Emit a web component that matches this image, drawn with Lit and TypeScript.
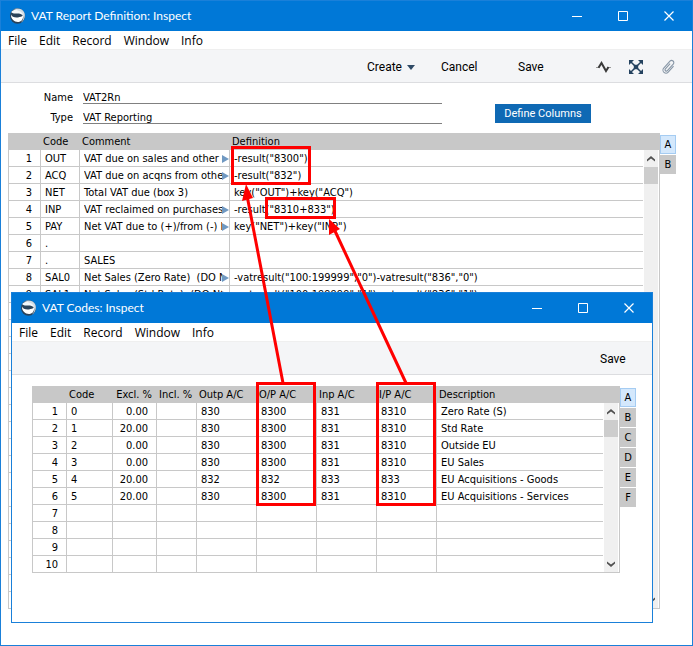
import { LitElement, html, css, svg, nothing } from "lit";
import { customElement, property } from "lit/decorators.js";
import { classMap } from "lit/directives/class-map.js";

interface Column {
  label: string;
  cls: string;
  numeric?: boolean;
}

const MENUS = ["File", "Edit", "Record", "Window", "Info"];

const REPORT_COLUMNS: Column[] = [
  { label: "", cls: "w32", numeric: true },
  { label: "Code", cls: "w39" },
  { label: "Comment", cls: "w150" },
  { label: "Definition", cls: "rest" },
];

const REPORT_ROWS: string[][] = [
  ["1", "OUT", "VAT due on sales and other o", '-result("8300")'],
  ["2", "ACQ", "VAT due on acqns from other", '-result("832")'],
  ["3", "NET", "Total VAT due (box 3)", 'key("OUT")+key("ACQ")'],
  ["4", "INP", "VAT reclaimed on purchases,", '-result("8310+833")'],
  ["5", "PAY", "Net VAT due to (+)/from (-) H", 'key("NET")+key("INP")'],
  ["6", ".", "", ""],
  ["7", ".", "SALES", ""],
  ["8", "SAL0", "Net Sales (Zero Rate)  (DO NO", '-vatresult("100:199999","0")-vatresult("836","0")'],
  ["9", "SAL1", "Net Sales (Std Rate)  (DO NOT", '-vatresult("100:199999","1")-vatresult("836","1")'],
  ...Array.from({ length: 18 }, () => ["", "", "", ""]),
];

const CODE_COLUMNS: Column[] = [
  { label: "", cls: "w34", numeric: true },
  { label: "Code", cls: "w46" },
  { label: "Excl. %", cls: "w44", numeric: true },
  { label: "Incl. %", cls: "w40" },
  { label: "Outp A/C", cls: "w60" },
  { label: "O/P A/C", cls: "w60" },
  { label: "Inp A/C", cls: "w60" },
  { label: "I/P A/C", cls: "w60" },
  { label: "Description", cls: "rest" },
];

const CODE_ROWS: string[][] = [
  ["1", "0", "0.00", "", "830", "8300", "831", "8310", "Zero Rate (S)"],
  ["2", "1", "20.00", "", "830", "8300", "831", "8310", "Std Rate"],
  ["3", "2", "0.00", "", "830", "8300", "831", "8310", "Outside EU"],
  ["4", "3", "0.00", "", "830", "8300", "831", "8310", "EU Sales"],
  ["5", "4", "20.00", "", "832", "832", "833", "833", "EU Acquisitions - Goods"],
  ["6", "5", "20.00", "", "830", "8300", "831", "8310", "EU Acquisitions - Services"],
  ...["7", "8", "9", "10"].map((n) => [n, "", "", "", "", "", "", "", ""]),
];

const base = css`
  * {
    box-sizing: border-box;
  }
  button,
  input {
    font: inherit;
    color: inherit;
    border: 0;
    padding: 0;
    margin: 0;
    background: none;
    border-radius: 0;
  }
  svg {
    display: block;
  }
`;

/** A framed desktop window: title bar, menu bar, toolbar slot and content. */
@customElement("app-window")
export class AppWindow extends LitElement {
  @property() heading = "";

  static styles = [
    base,
    css`
      :host {
        display: flex;
        flex-direction: column;
        box-sizing: border-box;
        border: 1px solid #1a80d9;
        background: #fff;
      }
      .title {
        display: flex;
        align-items: center;
        height: 30px;
        padding-left: 8px;
        gap: 5px;
        background: #0078d7;
        color: #fff;
        font: 12px/16px Lato, "Open Sans", sans-serif;
      }
      .name {
        flex: 1;
        font: inherit;
        margin: 0;
      }
      .controls {
        display: flex;
      }
      .controls button {
        width: 46px;
        height: 30px;
        display: grid;
        place-items: center;
      }
      .menu {
        display: flex;
        gap: 12px;
        height: 18px;
        padding: 1px 0 0 7px;
        font: 12px/18px "Open Sans", "Noto Sans", sans-serif;
      }
      .toolbar {
        display: flex;
        justify-content: flex-end;
        align-items: center;
        height: 34px;
        padding-top: 2px;
        border-top: 1px solid #efefef;
        border-bottom: 1px solid #dcdde0;
        background: #f4f5f7;
      }
    `,
  ];

  render() {
    return html`
      <header class="title">
        <svg width="17" height="16" viewBox="0 0 17 16" aria-hidden="true">
          <ellipse cx="8.5" cy="8" rx="7.500" ry="7.700" fill="#2a4259" />
          <path d="M4 1.500C8-.5 14 .5 15.500 5c1.200 4-.8 8-3.500 9.500 2-2 2.800-4 2-6.500C13 4 8 1.500 4 1.500z" fill="#d3dde6" />
          <path d="M2.200 4.200C3 2.500 6 1.200 9 2.200c3 1 5 3 5.200 5.800-1.500-2.300-3.500-2.500-6-2.500C6 5.500 3.500 5.500 2.200 4.200z" fill="#f3f7fa" />
          <path d="M2 6.500C2.500 9 6 9.800 9 9.400c2-.3 4-.8 5-1.800.5 3.500-1.500 6.200-4.500 6.400C5.500 14.300 1.600 11 2 6.500z" fill="#fff" />
        </svg>
        <h1 class="name">${this.heading}</h1>
        <div class="controls">
          <button aria-label="Minimize">
            <svg width="11" height="11"><path d="M0 5.500h10" stroke="#fff" /></svg>
          </button>
          <button aria-label="Maximize">
            <svg width="11" height="11"><path d="M.5.5h9v9h-9z" stroke="#fff" fill="none" /></svg>
          </button>
          <button aria-label="Close">
            <svg width="11" height="11"><path d="M.5.5l9 9M9.500.5l-9 9" stroke="#fff" stroke-width="1.200" /></svg>
          </button>
        </div>
      </header>
      <nav class="menu">${MENUS.map((m) => html`<button>${m}</button>`)}</nav>
      <div class="toolbar"><slot name="toolbar"></slot></div>
      <slot></slot>
    `;
  }
}

/** A ruled matrix with a scrollbar and lettered flip tabs at its right. */
@customElement("data-matrix")
export class DataMatrix extends LitElement {
  @property({ attribute: false }) columns: Column[] = [];
  @property({ attribute: false }) rows: string[][] = [];
  @property({ attribute: false }) tabs: string[] = [];
  /** Index of the column whose long values carry a continuation arrow. */
  @property({ type: Number }) clipped = -1;

  static styles = [
    base,
    css`
      :host {
        display: flex;
        align-items: flex-start;
        font: 11px/14px "DejaVu Sans Condensed", "Noto Sans", sans-serif;
      }
      .frame {
        flex: 1;
        display: flex;
        border: solid #c8c8c8;
        border-width: 0 1px;
      }
      table {
        flex: 1;
        width: 0;
        table-layout: fixed;
        border-spacing: 0;
      }
      th,
      td {
        height: 17px;
        padding: 2px 0 0 4px;
        border-bottom: 1px solid #c8c8c8;
        border-right: 1px solid #c8c8c8;
        text-align: left;
        font-weight: normal;
        white-space: pre;
        overflow: hidden;
      }
      th {
        padding-left: 2px;
        background: #c8c8c8;
      }
      th:last-child,
      td:last-child {
        border-right: 0;
      }
      .numeric {
        text-align: right;
        padding: 2px 8px 0 0;
      }
      th.numeric {
        padding-right: 4px;
      }
      .w32 { width: 32px; }
      .w34 { width: 34px; }
      .w39 { width: 39px; }
      .w40 { width: 40px; }
      .w44 { width: 44px; }
      .w46 { width: 46px; }
      .w60 { width: 60px; }
      .w150 { width: 150px; }
      .clip {
        display: flex;
        align-items: center;
      }
      .clip span {
        flex: 1;
        width: 0;
        overflow: hidden;
      }
      .side {
        width: 16px;
        display: flex;
        flex-direction: column;
        border-top: 17px solid #c8c8c8;
        border-bottom: 1px solid #c8c8c8;
        padding: 0 1px;
      }
      .bar {
        flex: 1;
        display: flex;
        flex-direction: column;
        align-items: center;
        background: #f0f0f0;
      }
      .bar button {
        height: 17px;
        width: 14px;
        display: grid;
        place-items: center;
      }
      .thumb {
        height: 17px;
        width: 14px;
        background: #cdcdcd;
      }
      .fill {
        flex: 1;
      }
      .tabs {
        display: grid;
        gap: 1px;
        padding-top: 2px;
      }
      .tabs button {
        width: 16px;
        height: 19px;
        padding-top: 1px;
        background: #c8c8c8;
      }
      .tabs .on {
        background: #d4e8fc;
        border: 1px solid #a5ccf2;
      }
    `,
  ];

  private cell(value: string, index: number) {
    const long = index === this.clipped && value.length > 24;
    return html`<td class=${classMap({ numeric: !!this.columns[index].numeric })}>${long
      ? html`<div class="clip"><span>${value}</span><svg width="7" height="8"><path d="M0 0l7 4-7 4z" fill="#7099c2" /></svg></div>`
      : value}</td>`;
  }

  render() {
    return html`
      <div class="frame">
        <table>
          <thead>
            <tr>
              ${this.columns.map(
                (c) => html`<th scope="col" class="${c.cls} ${c.numeric ? "numeric" : ""}">${c.label}</th>`
              )}
            </tr>
          </thead>
          <tbody>
            ${this.rows.map((row) => html`<tr>${row.map((v, i) => this.cell(v, i))}</tr>`)}
          </tbody>
        </table>
        <div class="side">
          <div class="bar">
            <button aria-label="Scroll up">
              <svg width="8" height="6"><path d="M0 5.500V3.500L4 0l4 3.500v2L4 2.500z" fill="#505050" /></svg>
            </button>
            <div class="thumb"></div>
            <div class="fill"></div>
            <button aria-label="Scroll down">
              <svg width="8" height="6"><path d="M0 .5v2L4 6l4-3.500v-2L4 3.500z" fill="#505050" /></svg>
            </button>
          </div>
        </div>
      </div>
      <div class="tabs">
        ${this.tabs.map((t, i) => html`<button class=${i === 0 ? "on" : nothing}>${t}</button>`)}
      </div>
    `;
  }
}

@customElement("app-root")
export class AppRoot extends LitElement {
  static styles = [
    base,
    css`
      :host {
        display: block;
        position: relative;
        color: #000;
        font: 11px/16px "DejaVu Sans Condensed", "Noto Sans", sans-serif;
      }
      .report {
        min-height: 100vh;
      }
      .codes {
        position: absolute;
        top: 292px;
        left: 11px;
        right: 40px;
        bottom: 23px;
      }
      .actions {
        display: flex;
        align-items: center;
        font: 12px/16px Roboto, "Liberation Sans", sans-serif;
      }
      .actions button {
        text-align: left;
      }
      .create {
        display: flex;
        align-items: center;
        gap: 5px;
        width: 74px;
      }
      .cancel {
        width: 77px;
      }
      .save {
        width: 78px;
      }
      .codes .save {
        width: 52px;
      }
      .icons {
        display: flex;
        align-items: center;
        gap: 18px;
        padding-right: 16px;
      }
      .form {
        display: flex;
        align-items: flex-end;
        gap: 53px;
        padding: 4px 101px 9px 0;
      }
      .fields {
        flex: 1;
        display: grid;
        grid-template-columns: 72px 1fr;
        gap: 3px 10px;
      }
      .fields label {
        text-align: right;
        line-height: 22px;
        height: 17px;
      }
      .fields input {
        min-width: 0;
        height: 17px;
        padding-top: 4px;
        line-height: 12px;
        border-bottom: 1px solid #808080;
      }
      .define {
        width: 96px;
        height: 19px;
        margin-bottom: 1px;
        background: #0f69b4;
        color: #fff;
        font: 11px/18px Roboto, "Liberation Sans", sans-serif;
      }
      .lines {
        padding: 0 16px 0 7px;
      }
      .rates {
        padding: 11px 16px 0 20px;
      }
      .notes {
        position: absolute;
        top: 0;
        left: 0;
        pointer-events: none;
      }
    `,
  ];

  private marker(x: number, y: number, w: number, h: number) {
    return svg`<rect x=${x} y=${y} width=${w} height=${h} fill="none" stroke="#f00" stroke-width="3" />`;
  }

  render() {
    return html`
      <app-window class="report" heading="VAT Report Definition: Inspect">
        <div class="actions" slot="toolbar">
          <button class="create">Create<svg width="8" height="5"><path d="M0 0h8L4 5z" fill="#2f4a66" /></svg></button>
          <button class="cancel">Cancel</button>
          <button class="save">Save</button>
          <div class="icons">
            <button aria-label="Activities">
              <svg width="15" height="14" viewBox="0 0 15 14"><path d="M0 7.500h3.500M11 7.500h4" fill="none" stroke="#9a9a9a" /><path d="M2.500 7.800L5.500 3l4.500 8 2.500-4" fill="none" stroke="#3a3a3a" stroke-width="2" /></svg>
            </button>
            <button aria-label="Workflow">
              <svg width="14" height="14" viewBox="0 0 14 14"><path d="M2 2l10 10M12 2L2 12" stroke="#24425f" stroke-width="1.500" /><path d="M0 0h5L0 5zM14 0v5L9 0zM0 14V9l5 5zM14 14H9l5-5zM4.800 4.800h4.400v4.400H4.800z" fill="#24425f" /></svg>
            </button>
            <button aria-label="Attachments">
              <svg width="15" height="16" viewBox="0 0 15 16"><g transform="rotate(42 7.500 8)"><path d="M10.700 4v8a3 3 0 0 1-6 0V2.700a2.200 2.200 0 0 1 4.400 0v8.800a1.300 1.300 0 0 1-2.600 0V4.500" fill="none" stroke="#8796a6" stroke-width="1.100" /></g></svg>
            </button>
          </div>
        </div>
        <div class="form">
          <div class="fields">
            <label for="name">Name</label><input id="name" value="VAT2Rn" />
            <label for="type">Type</label><input id="type" value="VAT Reporting" />
          </div>
          <button class="define">Define Columns</button>
        </div>
        <data-matrix class="lines" .columns=${REPORT_COLUMNS} .rows=${REPORT_ROWS} .tabs=${["A", "B"]} clipped="2"></data-matrix>
      </app-window>

      <app-window class="codes" heading="VAT Codes: Inspect">
        <div class="actions" slot="toolbar"><button class="save">Save</button></div>
        <data-matrix class="rates" .columns=${CODE_COLUMNS} .rows=${CODE_ROWS} .tabs=${["A", "B", "C", "D", "E", "F"]}></data-matrix>
      </app-window>

      <svg class="notes" width="693" height="646" viewBox="0 0 693 646" aria-hidden="true">
        ${this.marker(232.5, 147.5, 77, 36)} ${this.marker(266.5, 198.5, 68, 19)}
        ${this.marker(257.5, 383.5, 57, 121)} ${this.marker(377.5, 383.5, 57, 121)}
        <path d="M283 383L247.500 198M406 383L335 231" stroke="#f00" stroke-width="3" />
        <path d="M246 184l7 14-11 3zM329 219l11 10-11 6z" fill="#f00" />
      </svg>
    `;
  }
}
